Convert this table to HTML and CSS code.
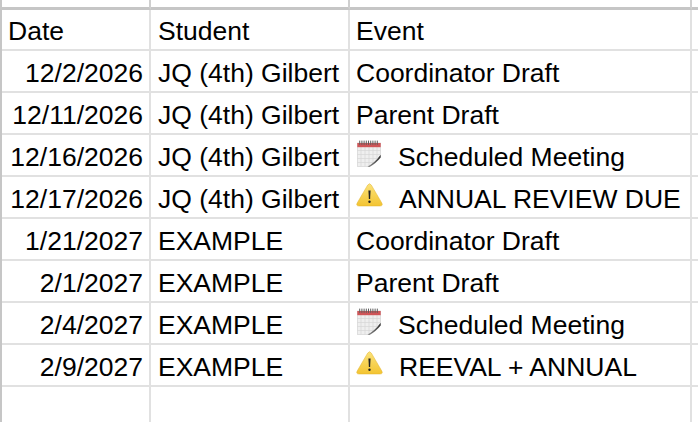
FILE: index.html
```html
<!DOCTYPE html>
<html>
<head>
<meta charset="utf-8">
<link rel="stylesheet" href="styles.css">
</head>
<body>
<div class="sheet">
  <div class="row top">
    <div class="cell c1"></div><div class="cell c2"></div><div class="cell c3"></div><div class="cell c4"></div>
  </div>
  <div class="row head">
    <div class="cell c1">Date</div><div class="cell c2">Student</div><div class="cell c3">Event</div><div class="cell c4"></div>
  </div>
  <div class="row">
    <div class="cell c1 num">12/2/2026</div><div class="cell c2">JQ (4th) Gilbert</div><div class="cell c3">Coordinator Draft</div><div class="cell c4"></div>
  </div>
  <div class="row">
    <div class="cell c1 num">12/11/2026</div><div class="cell c2">JQ (4th) Gilbert</div><div class="cell c3">Parent Draft</div><div class="cell c4"></div>
  </div>
  <div class="row">
    <div class="cell c1 num">12/16/2026</div><div class="cell c2">JQ (4th) Gilbert</div>
    <div class="cell c3"><svg class="ico cal" viewBox="0 0 24 27"><use href="#cal" width="24" height="27"/></svg><span class="lbl">Scheduled Meeting</span></div><div class="cell c4"></div>
  </div>
  <div class="row">
    <div class="cell c1 num">12/17/2026</div><div class="cell c2">JQ (4th) Gilbert</div>
    <div class="cell c3"><svg class="ico warn" viewBox="0 0 27 24"><use href="#warn" width="27" height="24"/></svg><span class="lbl">ANNUAL REVIEW DUE</span></div><div class="cell c4"></div>
  </div>
  <div class="row">
    <div class="cell c1 num">1/21/2027</div><div class="cell c2">EXAMPLE</div><div class="cell c3">Coordinator Draft</div><div class="cell c4"></div>
  </div>
  <div class="row">
    <div class="cell c1 num">2/1/2027</div><div class="cell c2">EXAMPLE</div><div class="cell c3">Parent Draft</div><div class="cell c4"></div>
  </div>
  <div class="row">
    <div class="cell c1 num">2/4/2027</div><div class="cell c2">EXAMPLE</div>
    <div class="cell c3"><svg class="ico cal" viewBox="0 0 24 27"><use href="#cal" width="24" height="27"/></svg><span class="lbl">Scheduled Meeting</span></div><div class="cell c4"></div>
  </div>
  <div class="row">
    <div class="cell c1 num">2/9/2027</div><div class="cell c2">EXAMPLE</div>
    <div class="cell c3"><svg class="ico warn" viewBox="0 0 27 24"><use href="#warn" width="27" height="24"/></svg><span class="lbl">REEVAL + ANNUAL</span></div><div class="cell c4"></div>
  </div>
  <div class="row last">
    <div class="cell c1"></div><div class="cell c2"></div><div class="cell c3"></div><div class="cell c4"></div>
  </div>
</div>

<svg class="defs" width="0" height="0">
  <defs>
    <linearGradient id="wg" x1="0" y1="0" x2="0" y2="1">
      <stop offset="0" stop-color="#fbe27a"/>
      <stop offset="1" stop-color="#f3c432"/>
    </linearGradient>
    <linearGradient id="curl" x1="0" y1="1" x2="1" y2="0">
      <stop offset="0" stop-color="#8a8a8a"/>
      <stop offset="1" stop-color="#2a2a2a"/>
    </linearGradient>
    <symbol id="cal" viewBox="0 0 24 27">
      <rect x="0.3" y="3" width="23.4" height="23.6" fill="#efefef" stroke="#cfcfcf" stroke-width="0.6"/>
      <g stroke="#d7d7d7" stroke-width="0.7">
        <line x1="0.3" y1="10.5" x2="23.7" y2="10.5"/>
        <line x1="0.3" y1="14.5" x2="23.7" y2="14.5"/>
        <line x1="0.3" y1="18.5" x2="23.7" y2="18.5"/>
        <line x1="0.3" y1="22.5" x2="23.7" y2="22.5"/>
        <line x1="4" y1="7" x2="4" y2="26.6"/>
        <line x1="8" y1="7" x2="8" y2="26.6"/>
        <line x1="12" y1="7" x2="12" y2="26.6"/>
        <line x1="16" y1="7" x2="16" y2="26.6"/>
        <line x1="20" y1="7" x2="20" y2="26.6"/>
      </g>
      <rect x="0.3" y="3" width="23.4" height="4.2" fill="#cf5558"/>
      <g fill="#5e5e5e">
        <rect x="2.2" y="0.6" width="1" height="4.2"/>
        <rect x="4.4" y="0.6" width="1" height="4.2"/>
        <rect x="6.6" y="0.6" width="1" height="4.2"/>
        <rect x="8.8" y="0.6" width="1" height="4.2"/>
        <rect x="11" y="0.6" width="1" height="4.2"/>
        <rect x="13.2" y="0.6" width="1" height="4.2"/>
        <rect x="15.4" y="0.6" width="1" height="4.2"/>
        <rect x="17.6" y="0.6" width="1" height="4.2"/>
        <rect x="19.8" y="0.6" width="1" height="4.2"/>
      </g>
      <path d="M12 27 L24 14.5 L24 27 Z" fill="#ffffff"/>
      <path d="M10.5 26.6 Q17 23.5 23.7 14.8 L23.7 17.6 Q18.5 24 12.5 27 Z" fill="url(#curl)"/>
    </symbol>
    <symbol id="warn" viewBox="0 0 27 24">
      <path d="M11.6 2.2 Q13.5 -0.8 15.4 2.2 L25.8 20 Q27.2 23 24 23 L3 23 Q-0.2 23 1.2 20 Z" fill="url(#wg)" stroke="#e3b22a" stroke-width="0.5"/>
      <path d="M12.4 7.5 L14.6 7.5 L14.1 16 L12.9 16 Z" fill="#222"/>
      <circle cx="13.5" cy="18.8" r="1.2" fill="#222"/>
    </symbol>
  </defs>
</svg>
</body>
</html>
```

FILE: styles.css
```css
html, body {
  margin: 0;
  padding: 0;
  background: #ffffff;
}

body {
  font-family: "Liberation Sans", Arial, Helvetica, sans-serif;
  font-size: 26.5px;
  color: #000000;
  overflow: hidden;
  width: 698px;
  height: 422px;
}

.sheet {
  display: flex;
  flex-direction: column;
  border-left: 2px solid #c6c6c6;
  width: 696px;
}

.row {
  display: flex;
  height: 42px;
  flex: none;
}

.cell {
  box-sizing: border-box;
  height: 100%;
  border-right: 2px solid #e1e1e1;
  border-bottom: 2px solid #e1e1e1;
  display: flex;
  align-items: flex-end;
  padding: 0 6px 4px 6px;
  line-height: 28px;
  white-space: nowrap;
  overflow: hidden;
}

.c1 { width: 149px; flex: none; }
.c2 { width: 199px; flex: none; padding-left: 7px; }
.c3 { width: 342px; flex: none; }
.c4 { flex: 1; min-width: 0; }

.num { justify-content: flex-end; }

.top { height: 10px; }
.top .cell {
  border-bottom: 3px solid #c6c6c6;
  border-right-color: #cfcfcf;
}

.head { height: 41px; }
.head .cell { padding-bottom: 4px; }

.last { height: 40px; }
.last .cell { border-bottom: none; }

.ico {
  flex: none;
  align-self: center;
}
.cal {
  width: 24px;
  height: 27px;
  margin: 0 17px 0 1px;
}
.warn {
  width: 27px;
  height: 24px;
  margin: 0 16px 0 0;
}

.defs {
  position: absolute;
  width: 0;
  height: 0;
}
```
